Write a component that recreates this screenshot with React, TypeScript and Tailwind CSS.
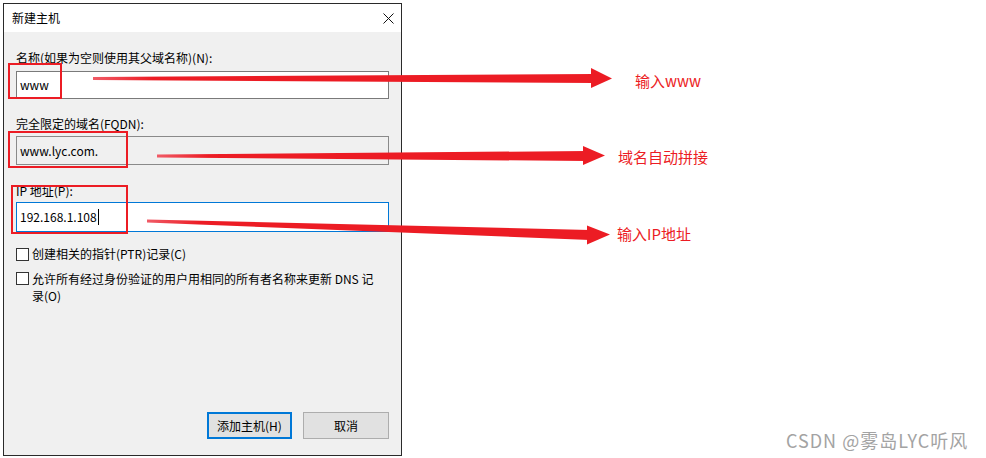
import React from 'react';

const ui = { fontFamily: '"Noto Sans CJK SC", "Noto Sans", sans-serif' };

function Arrows() {
  return (
    <svg className="pointer-events-none absolute left-0 top-0" width={986} height={458}>
      <defs>
        <linearGradient id="shaft" x1="0" x2="1" y1="0" y2="0">
          <stop offset="0" stopColor="#f05b66" />
          <stop offset="0.12" stopColor="#ec1c24" />
          <stop offset="1" stopColor="#ec1c24" />
        </linearGradient>
      </defs>
      {/* red highlight boxes */}
      <rect x={9} y={64} width={52} height={34} fill="none" stroke="#ec1c24" strokeWidth={2} />
      <rect x={9} y={132} width={118} height={35} fill="none" stroke="#ec1c24" strokeWidth={2} />
      <rect x={12} y={186} width={115} height={47} fill="none" stroke="#ec1c24" strokeWidth={2} />
      {/* arrow 1 */}
      <polygon points="93,77 594,74 594,83 93,80" fill="url(#shaft)" />
      <polygon points="591,68 612,78.5 591,88" fill="#ec1c24" />
      {/* arrow 2 */}
      <polygon points="157,154.5 586,151 586,161 157,157.5" fill="url(#shaft)" />
      <polygon points="583,146 605,155.5 583,165" fill="#ec1c24" />
      {/* arrow 3 */}
      <polygon points="147,219.5 590,230 590,240 147,222.5" fill="url(#shaft)" />
      <polygon points="587,225.5 610,234.5 587,244.5" fill="#ec1c24" />
    </svg>
  );
}

export default function App() {
  return (
    <div className="relative h-[458px] w-[986px] overflow-hidden bg-white" style={ui}>
      <div className="pl-[3px] pt-[3px]">
        <div className="flex h-[453px] w-[399px] flex-col border border-[#2a2a2a] bg-white text-[12px] text-black">
          <div className="flex h-[28px] items-center justify-between bg-white pl-[8px] pr-[7px]">
            <span className="leading-[16px]">新建主机</span>
            <svg width="11" height="11" viewBox="0 0 11 11">
              <path d="M0.5 0.5 L10.5 10.5 M10.5 0.5 L0.5 10.5" stroke="#111" strokeWidth="1" />
            </svg>
          </div>
          <div className="flex flex-1 flex-col bg-[#f0f0f0] px-[12px]">
            <div className="mt-[18px] leading-[16px]">名称(如果为空则使用其父域名称)(N):</div>
            <div className="mt-[5px] flex h-[28px] w-[373px] items-center border border-[#7a7a7a] bg-white pl-[3px]">
              <span className="leading-[16px]">www</span>
            </div>

            <div className="mt-[17px] leading-[16px]">完全限定的域名(FQDN):</div>
            <div className="mt-[4px] flex h-[29px] w-[373px] items-center border border-[#8a8a8a] bg-[#f0f0f0] pl-[3px]">
              <span className="leading-[16px]">www.lyc.com.</span>
            </div>

            <div className="mt-[18px] leading-[16px]">IP 地址(P):</div>
            <div className="mt-[3px] flex h-[30px] w-[373px] items-center border border-[#0078d7] bg-white pl-[3px]">
              <span className="leading-[16px]">192.168.1.108</span>
              <span className="ml-[1px] h-[16px] w-[1px] bg-black" />
            </div>

            <div className="mt-[14px] flex items-center gap-[3px] leading-[16px]">
              <span className="h-[13px] w-[13px] border border-[#333] bg-white" />
              <span>创建相关的指针(PTR)记录(C)</span>
            </div>
            <div className="mt-[8px] flex items-start gap-[3px]">
              <span className="mt-[2px] h-[13px] w-[13px] shrink-0 border border-[#333] bg-white" />
              <span className="whitespace-nowrap leading-[17px]">
                允许所有经过身份验证的用户用相同的所有者名称来更新 DNS 记
                <br />
                录(O)
              </span>
            </div>

            <div className="mt-auto mb-[16px] flex justify-end gap-[11px]">
              <button className="h-[27px] w-[85px] border-2 border-[#0078d7] bg-[#e1e1e1] leading-[16px]">添加主机(H)</button>
              <button className="h-[27px] w-[86px] border border-[#adadad] bg-[#e1e1e1] leading-[16px]">取消</button>
            </div>
          </div>
        </div>
      </div>

      <Arrows />

      <div className="absolute left-[635px] top-[71px] text-[15px] leading-[20px] text-[#ec1c24]">输入www</div>
      <div className="absolute left-[618px] top-[147px] text-[15px] leading-[20px] text-[#ec1c24]">域名自动拼接</div>
      <div className="absolute left-[617px] top-[224px] text-[15px] leading-[20px] text-[#ec1c24]">输入IP地址</div>

      <div className="absolute left-[786px] top-[429px] text-[18px] leading-[22px] tracking-[1px] text-[#a3a3a3]">CSDN @雾岛LYC听风</div>
    </div>
  );
}
